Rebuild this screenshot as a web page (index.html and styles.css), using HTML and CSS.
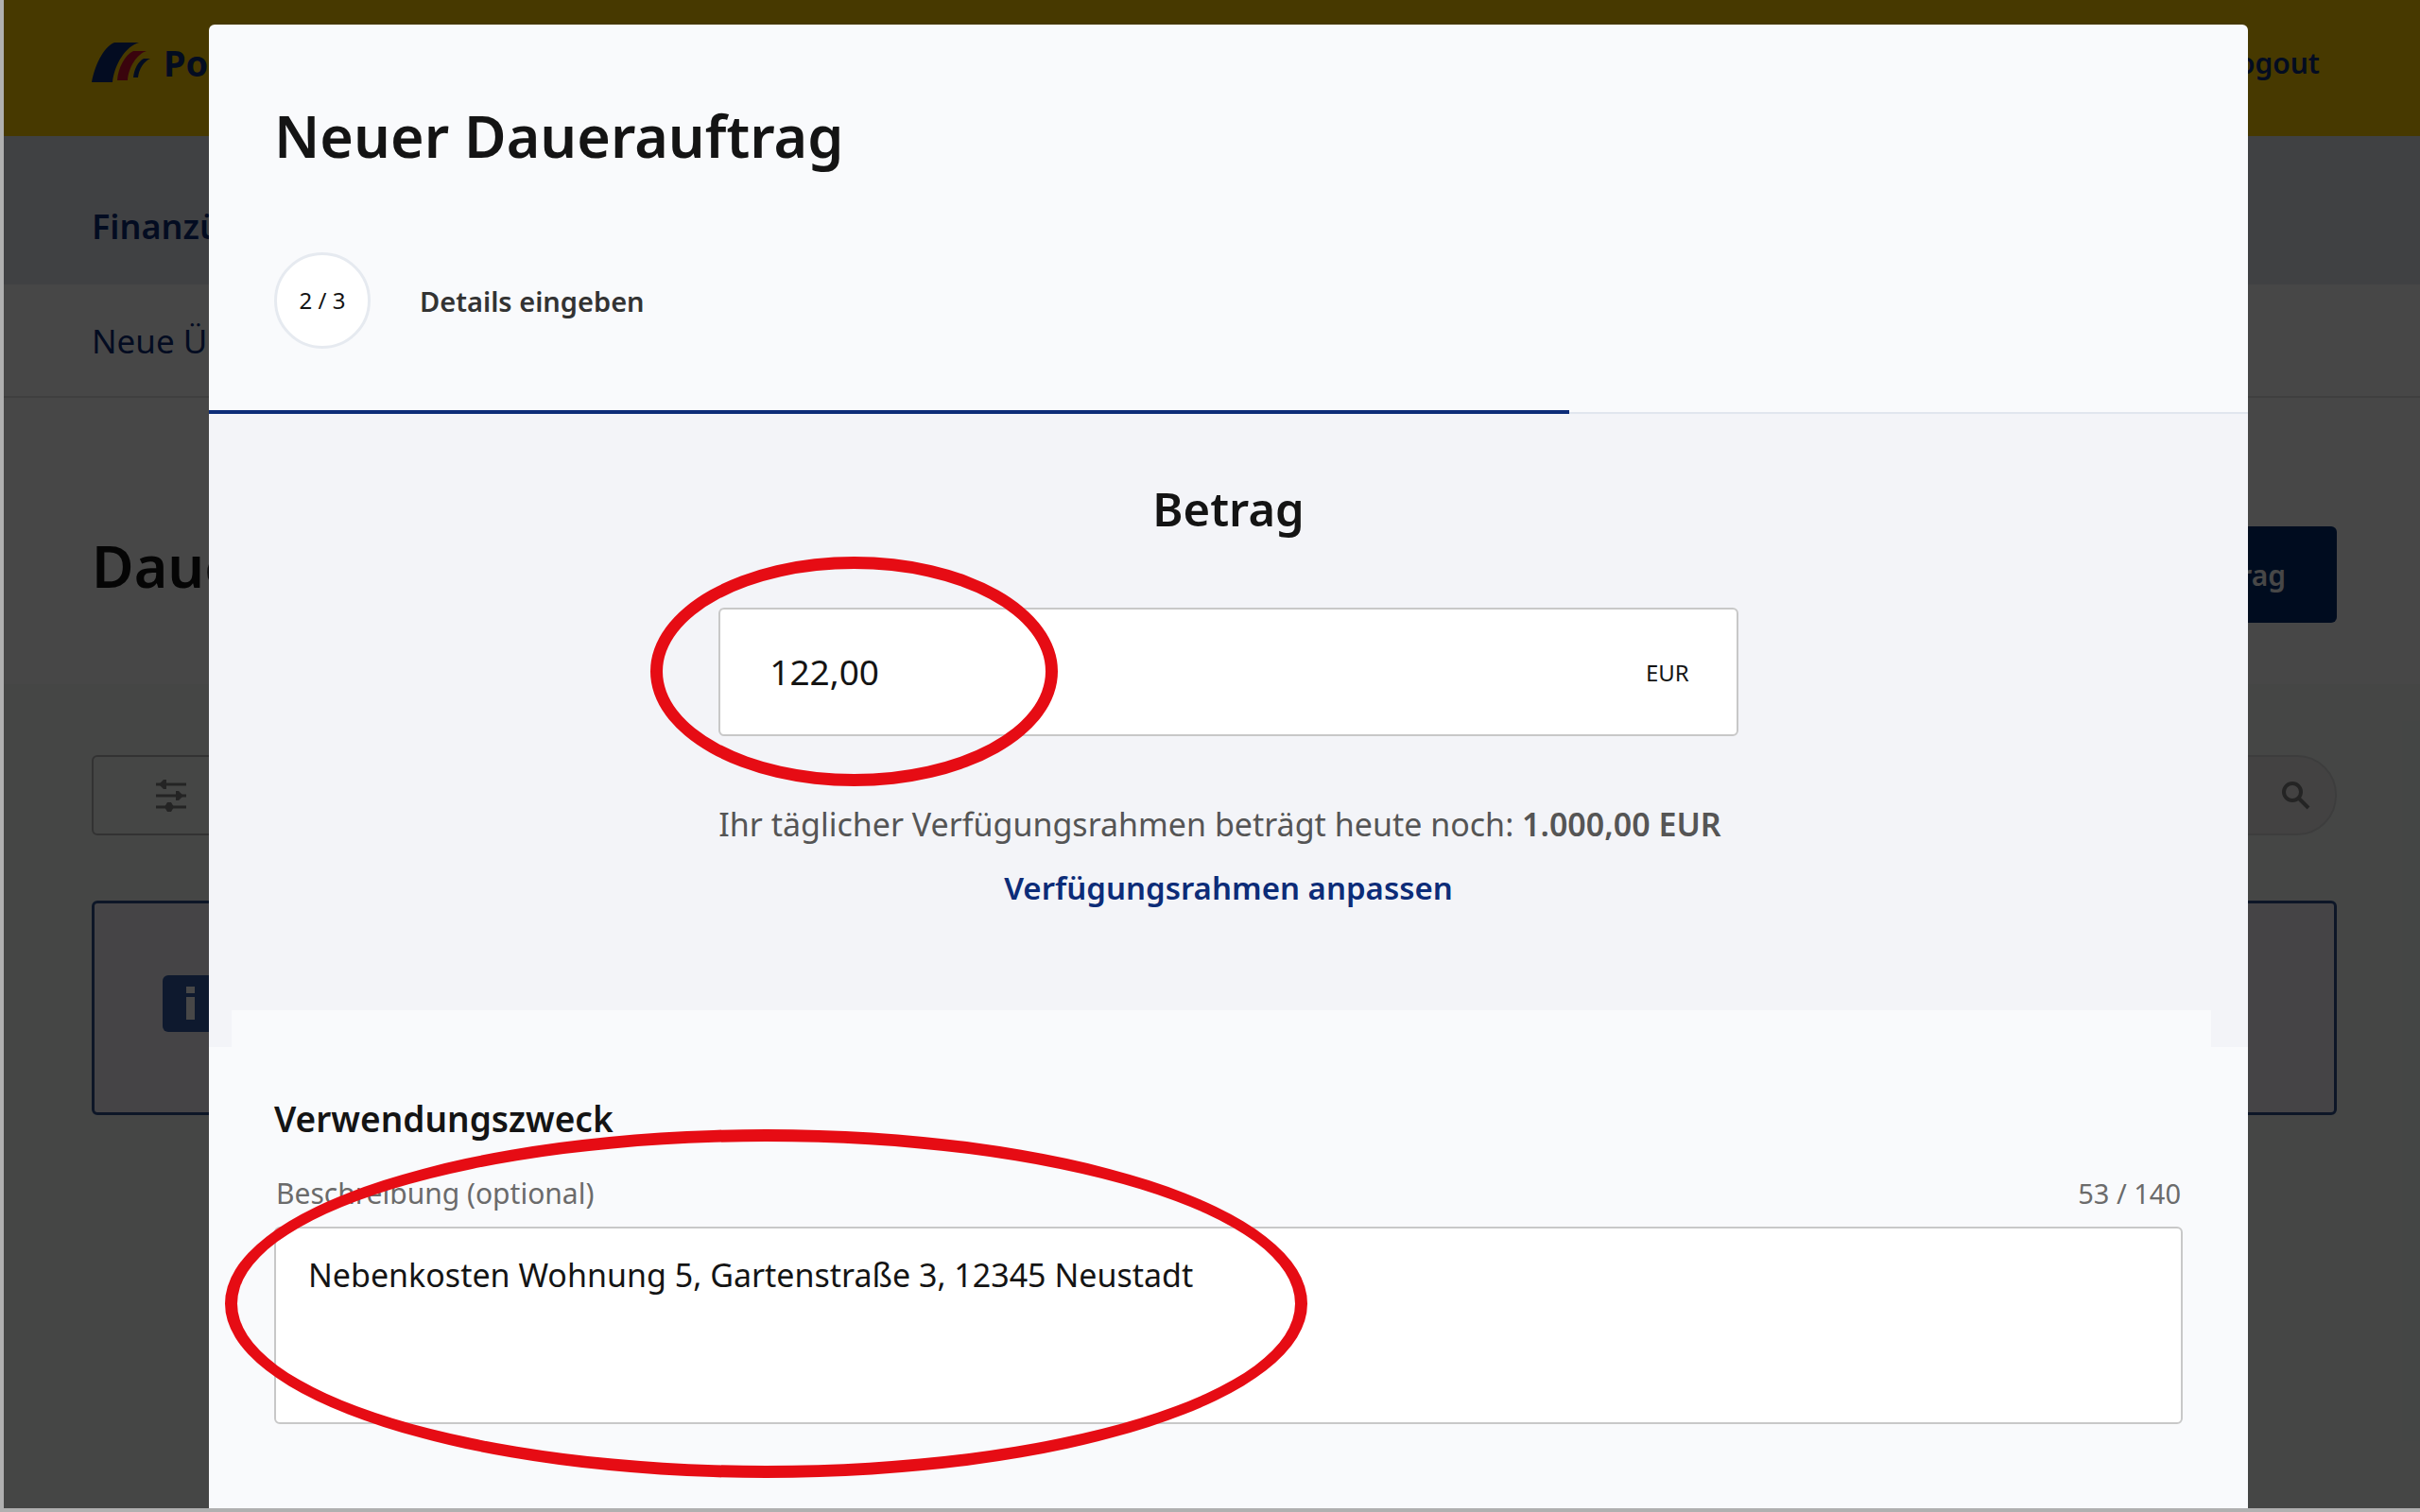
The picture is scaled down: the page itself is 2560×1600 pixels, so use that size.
FILE: index.html
```
<!DOCTYPE html>
<html lang="de">
<head>
  <meta charset="utf-8" />
  <title>Neuer Dauerauftrag</title>
  <link rel="stylesheet" href="styles.css">
</head>
<body>
  <div class="page">
    <header class="topbar">
      <a class="logo" href="#">
        <svg width="62" height="44" viewBox="0 0 62 44">
          <path fill="#0c2c78" d="M0 43C3 26 12 6 24 1h26C36 5 24 24 22 43z"/>
          <path fill="#d01030" d="M27 41c1-13 8-27 17-31h14C48 13 39 27 38 41z"/>
          <path fill="#0c2c78" d="M44 38c1-9 5-17 11-20h7C55 21 50 29 49 38z"/>
        </svg>
        Postbank
      </a>
      <a class="logout" href="#">Logout</a>
    </header>
    <nav class="nav"><a href="#">Finanzübersicht</a></nav>
    <nav class="subnav"><a href="#">Neue Überweisung</a></nav>
    <div class="heading">
      <h2>Daueraufträge</h2>
      <button type="button" class="new-order">Neuer Dauerauftrag</button>
    </div>
    <main class="list">
      <div class="tools">
        <button type="button" class="filter" aria-label="Filter">
          <svg width="32" height="36" viewBox="0 0 32 36" fill="#808080" stroke="#808080" stroke-width="3">
            <path d="M0 6h32M0 18h32M0 30h32"/>
            <path stroke="none" d="M3 6l5-5h3v10H8zM29 18l-5-5h-3v10h3zM9 30l3-5h4l3 5-3 5h-4z"/>
          </svg>
        </button>
        <button type="button" class="search" aria-label="Suche">
          <svg width="30" height="30" viewBox="0 0 30 30" fill="none" stroke="#808080" stroke-width="4">
            <circle cx="11" cy="11" r="9"/>
            <path d="M18 18l10 10"/>
          </svg>
        </button>
      </div>
      <div class="info">
        <svg class="info-icon" width="72" height="60" viewBox="0 0 72 60">
          <rect width="72" height="60" rx="6" fill="#345ca4"/>
          <path fill="#fff" d="M25 12h9v7h-9zM25 23h9v24h-9z"/>
        </svg>
      </div>
    </main>
  </div>

  <div class="overlay">
    <form class="modal">
      <header class="modal-head">
        <h1>Neuer Dauerauftrag</h1>
        <div class="step">
          <span class="step-number">2 / 3</span>
          <span class="step-name">Details eingeben</span>
        </div>
      </header>
      <div class="progress"><div class="progress-bar" style="width: 66.7%"></div></div>

      <section class="amount">
        <label class="amount-title" for="betrag">Betrag</label>
        <div class="amount-box">
          <input type="text" id="betrag" value="122,00" />
          <span>EUR</span>
          <div class="mark mark-amount"></div>
        </div>
        <p>Ihr täglicher Verfügungsrahmen beträgt heute noch: <b>1.000,00 EUR</b></p>
        <a href="#">Verfügungsrahmen anpassen</a>
      </section>

      <section class="purpose">
        <h2>Verwendungszweck</h2>
        <div class="purpose-label">
          <label for="zweck">Beschreibung (optional)</label>
          <span class="counter">53 / 140</span>
        </div>
        <textarea id="zweck">Nebenkosten Wohnung 5, Gartenstraße 3, 12345 Neustadt</textarea>
        <div class="mark mark-purpose"></div>
      </section>
    </form>
  </div>
</body>
</html>
```
FILE: styles.css
```
* {
  box-sizing: border-box;
}

body {
  margin: 0;
  height: 100vh;
  position: relative;
  overflow: hidden;
  border-left: 4px solid #b0b0b0;
  border-bottom: 4px solid #b0b0b0;
  font-family: "Noto Sans", sans-serif;
  color: #141414;
}

h1, h2, p {
  margin: 0;
}

a {
  color: #0c2c78;
  font-weight: 600;
  text-decoration: none;
}

input, textarea, button {
  font-family: inherit;
  color: inherit;
}

/* page behind the dialog */
.page {
  height: 100%;
  display: flex;
  flex-direction: column;
}

.topbar, .nav, .subnav, .heading, .list {
  padding: 0 88px 0 93px;
}

.topbar, .nav, .subnav, .heading {
  display: flex;
  align-items: center;
  justify-content: space-between;
}

.topbar {
  height: 144px;
  padding-bottom: 12px;
  background: #fc0;
}

.logo {
  display: flex;
  align-items: center;
  gap: 14px;
  font-size: 38px;
  font-weight: 700;
}

.logout {
  margin-right: 18px;
  font-size: 30px;
}

.nav {
  height: 157px;
  padding-top: 34px;
  background: #e5e8ef;
  font-size: 36px;
}

.subnav {
  height: 120px;
  border-bottom: 2px solid #e0e0e0;
  font-size: 35px;
}

.subnav a {
  font-weight: 400;
}

.heading {
  height: 303px;
  align-items: flex-start;
  padding-top: 136px;
}

.heading h2 {
  font-size: 61px;
  font-weight: 600;
  line-height: 84px;
}

.new-order {
  height: 102px;
  padding: 0 54px;
  border: none;
  border-radius: 6px;
  background: #002c70;
  color: #fff;
  font-size: 30px;
  font-weight: 600;
}

.list {
  flex: 1;
  padding-top: 75px;
  background: #f6fbf8;
}

.tools {
  display: flex;
  justify-content: space-between;
}

.filter, .search {
  width: 400px;
  height: 85px;
  display: flex;
  align-items: center;
  padding: 0 66px;
  border: 2px solid #b4b4b4;
  border-radius: 6px;
  background: none;
}

.search {
  justify-content: flex-end;
  padding: 0 26px;
  border-color: #dadada;
  border-radius: 42px;
  background: #f0eeee;
}

.info {
  height: 227px;
  margin-top: 69px;
  padding: 76px 72px;
  border: 3px solid #30508c;
  border-radius: 6px;
  background: #f6f3fa;
}

/* dialog */
.overlay {
  position: absolute;
  inset: 0;
  display: flex;
  padding: 26px 182px 0 217px;
  background: rgba(0, 0, 0, 0.72);
}

.modal {
  flex: 1;
  border-radius: 6px 6px 0 0;
  background: #f9fafc;
}

.modal-head {
  padding: 78px 69px 65px;
}

.modal-head h1 {
  font-size: 61px;
  font-weight: 600;
  line-height: 80px;
}

.step {
  display: flex;
  align-items: center;
  gap: 52px;
  margin-top: 83px;
}

.step-number {
  width: 102px;
  height: 102px;
  border: 3px solid #e6eaf0;
  border-radius: 50%;
  background: #fff;
  font-size: 24px;
  line-height: 96px;
  text-align: center;
}

.step-name {
  font-size: 29px;
  font-weight: 600;
  color: #333;
}

.progress {
  border-bottom: 2px solid #e1e6ee;
}

.progress-bar {
  height: 4px;
  margin-bottom: -2px;
  background: #0c2c78;
}

.amount {
  display: flex;
  flex-direction: column;
  align-items: center;
  padding-top: 66px;
  background: #f3f4f8;
}

.amount::after {
  content: "";
  align-self: stretch;
  height: 39px;
  margin: 95px 39px 0 24px;
  background: #f9fafc;
}

.amount-title {
  font-size: 49px;
  font-weight: 600;
  line-height: 68px;
}

.amount-box {
  position: relative;
  width: 50%;
  height: 136px;
  display: flex;
  align-items: center;
  margin-top: 71px;
  padding: 0 50px;
  border: 2px solid #c8c8c8;
  border-radius: 6px;
  background: #fff;
}

.amount-box input {
  flex: 1;
  padding: 0 0 2px 2px;
  border: none;
  outline: none;
  background: none;
  font-size: 37px;
}

.amount-box span {
  font-size: 24px;
}

.amount p {
  width: 50%;
  margin-top: 59px;
  color: #555;
  font-size: 34px;
  line-height: 68px;
  white-space: nowrap;
}

.amount p b {
  font-weight: 600;
}

.amount a {
  font-size: 33px;
  line-height: 68px;
}

.purpose {
  position: relative;
  padding: 50px 69px 0;
}

.purpose h2 {
  font-size: 37px;
  font-weight: 600;
  line-height: 52px;
}

.purpose-label {
  display: flex;
  justify-content: space-between;
  margin-top: 30px;
  padding: 0 2px;
  color: #6b6b6b;
  font-size: 30px;
  line-height: 46px;
}

.purpose-label .counter {
  font-size: 29px;
}

.purpose textarea {
  display: block;
  width: 100%;
  height: 209px;
  margin-top: 12px;
  padding: 24px 34px;
  border: 2px solid #c8c8c8;
  border-radius: 6px;
  outline: none;
  resize: none;
  background: #fff;
  font-size: 34px;
  line-height: 50px;
}

/* red ellipses around the filled fields */
.mark {
  position: absolute;
  border: 13px solid #e60c14;
  border-radius: 50%;
  pointer-events: none;
}

.mark-amount {
  top: -56px;
  left: -74px;
  width: 431px;
  height: 243px;
}

.mark-purpose {
  top: 87px;
  left: 17px;
  width: 1145px;
  height: 369px;
}
```
